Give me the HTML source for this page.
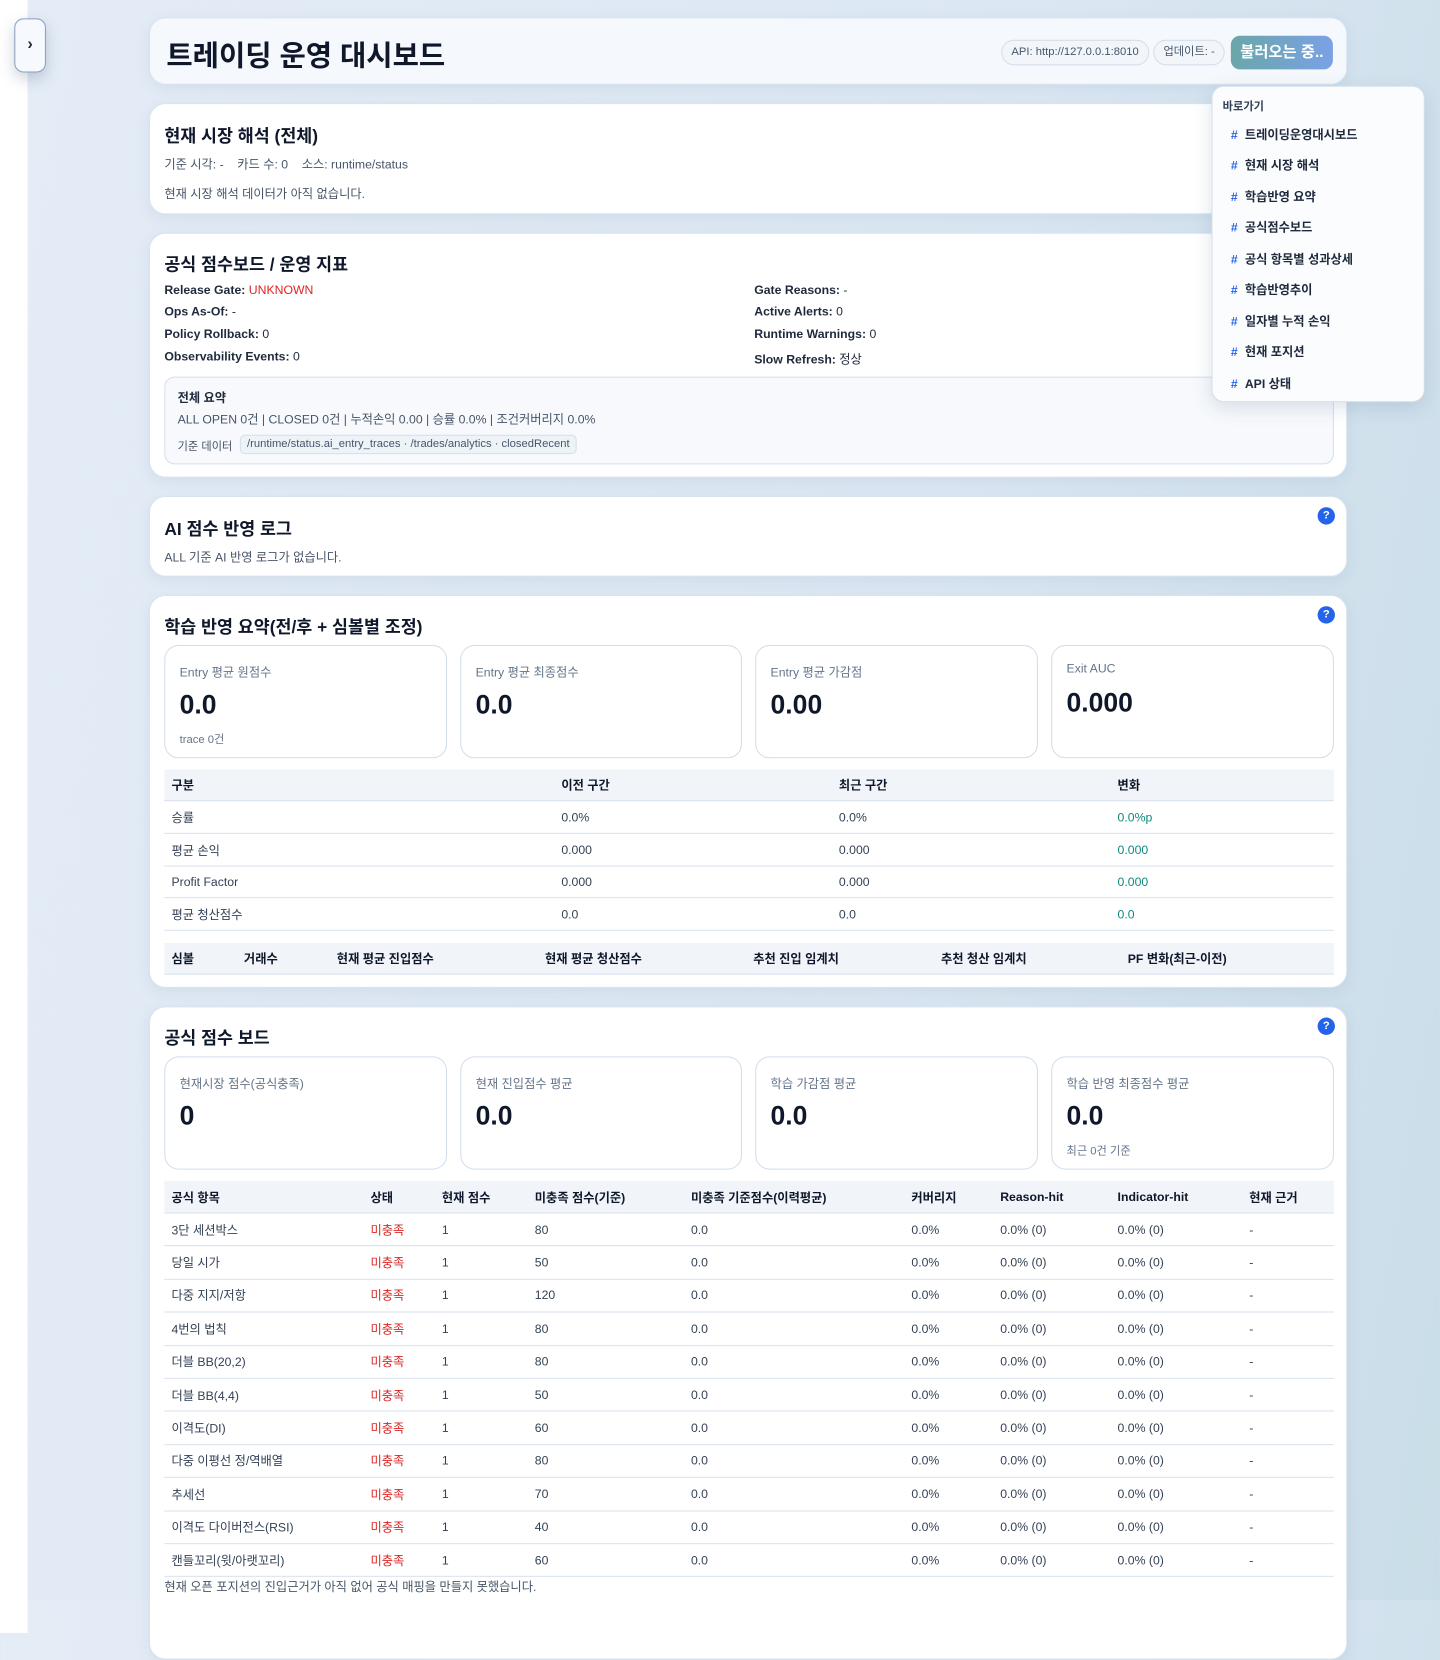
<!DOCTYPE html>
<html><head><meta charset="utf-8"><style>
*{box-sizing:border-box;margin:0;padding:0}
body{width:1440px;height:1600px;overflow:hidden;font-family:"Liberation Sans","Noto Sans CJK KR",sans-serif;color:#1e293b;background:linear-gradient(100deg,#e4ecf6 0%,#dce7f3 60%,#c9dde8 100%);position:relative}
#w{position:absolute;left:0;top:0;width:1411px;height:1568px;transform:scale(1.0206);transform-origin:0 0}
.strip{position:absolute;left:0;top:0;width:27px;height:1600px;background:#fff}
.tog{position:absolute;left:14px;top:18px;width:31px;height:53px;border:1px solid #8aa0bd;border-radius:9px;background:#f6f9fd;box-shadow:0 6px 14px rgba(60,80,120,.25);text-align:center;line-height:50px;font-size:16px;font-weight:bold;color:#1e293b}
.card{position:absolute;left:146px;width:1174px;background:#fff;border-radius:16px;border:1px solid #d9e3ef;box-shadow:0 4px 14px rgba(100,130,170,.12)}
.hdr{top:17px;height:66px;background:#f5f8fc}
.hdr h1{position:absolute;left:16px;top:15px;font-size:28px;font-weight:bold;color:#0f172a}
.pill{position:absolute;top:21px;height:25px;border:1px solid #d5dfeb;border-radius:13px;font-size:11px;color:#475569;line-height:23px;padding:0 9px;background:#f2f6fb}
.btn{position:absolute;left:1059px;top:17px;width:100px;height:33px;border-radius:9px;background:linear-gradient(90deg,#6aa7a8,#7aa1e6);color:#fff;font-size:15px;font-weight:bold;line-height:33px;text-align:center}
h2{position:absolute;left:14px;font-size:17px;font-weight:bold;color:#0f172a}
.t{position:absolute;font-size:12px;color:#475569;white-space:nowrap}
.k{position:absolute;font-size:12px;color:#1e293b;white-space:nowrap}
.k b{font-weight:bold}
.red{color:#dc2626}
.sum{position:absolute;left:14px;top:140px;width:1146px;height:86px;border:1px solid #d5dfeb;border-radius:10px;background:#f7f9fc}
.code{position:absolute;left:73px;top:56px;height:19px;border:1px solid #d5dfeb;border-radius:5px;background:#eef3f8;font-size:11px;color:#475569;line-height:17px;padding:0 6px}
.q{position:absolute;right:11px;width:17px;height:17px;border-radius:50%;background:#2563eb;color:#fff;font-size:11px;font-weight:bold;text-align:center;line-height:17px}
.m{position:absolute;width:277px;height:111px;border:1px solid #d2ddeb;border-radius:14px;background:#fff}
.m .l{position:absolute;left:14px;top:17px;font-size:12px;color:#64748b}
.m .v{position:absolute;left:14px;top:42px;font-size:26px;font-weight:bold;color:#0f172a}
.m .s{position:absolute;left:14px;top:83px;font-size:11px;color:#64748b}
.tbl{position:absolute;left:14px;width:1146px}
.row{position:relative;border-bottom:1px solid #d8e2ee;font-size:12px;color:#334155}
.row span{position:absolute;top:50%;transform:translateY(-50%);white-space:nowrap}
.th{background:#f1f5fa;font-weight:bold;color:#0f172a}
.g{color:#0f8a7a}
.nav{position:absolute;left:1187px;top:84px;width:209px;height:310px;background:#fbfcfe;border:1px solid #d5dfeb;border-radius:12px;box-shadow:0 6px 18px rgba(80,110,150,.18)}
.nav .h{position:absolute;left:10px;top:11px;font-size:11px;color:#334155;font-weight:bold}
.nav .i{position:absolute;left:18px;font-size:12px;font-weight:bold;color:#1e293b;white-space:nowrap}
.nav .i i{font-style:normal;color:#2563eb;margin-right:7px}
</style></head><body>
<div id="w">
<div class="strip"></div>
<div class="tog">›</div>

<div class="card hdr"><h1>트레이딩 운영 대시보드</h1>
<div class="pill" style="left:834px">API: http://127.0.0.1:8010</div>
<div class="pill" style="left:983px">업데이트: -</div>
<div class="btn">불러오는 중..</div></div>

<div class="card" style="top:101px;height:109px">
<h2 style="top:17px">현재 시장 해석 (전체)</h2>
<div class="t" style="left:14px;top:50px">기준 시각: - &nbsp;&nbsp; 카드 수: 0 &nbsp;&nbsp; 소스: runtime/status</div>
<div class="t" style="left:14px;top:79px">현재 시장 해석 데이터가 아직 없습니다.</div></div>

<div class="card" style="top:228px;height:240px">
<h2 style="top:16px">공식 점수보드 / 운영 지표</h2>
<div class="k" style="left:14px;top:48px"><b>Release Gate:</b> <span class="red">UNKNOWN</span></div>
<div class="k" style="left:14px;top:69px"><b>Ops As-Of:</b> -</div>
<div class="k" style="left:14px;top:91px"><b>Policy Rollback:</b> 0</div>
<div class="k" style="left:14px;top:113px"><b>Observability Events:</b> 0</div>
<div class="k" style="left:592px;top:48px"><b>Gate Reasons:</b> -</div>
<div class="k" style="left:592px;top:69px"><b>Active Alerts:</b> 0</div>
<div class="k" style="left:592px;top:91px"><b>Runtime Warnings:</b> 0</div>
<div class="k" style="left:592px;top:114px"><b>Slow Refresh:</b> 정상</div>
<div class="sum"><div class="k" style="left:12px;top:11px"><b>전체 요약</b></div>
<div class="t" style="left:12px;top:32px">ALL OPEN 0건 | CLOSED 0건 | 누적손익 0.00 | 승률 0.0% | 조건커버리지 0.0%</div>
<div class="t" style="left:12px;top:59px;font-size:11px">기준 데이터</div>
<div class="code">/runtime/status.ai_entry_traces · /trades/analytics · closedRecent</div></div></div>

<div class="card" style="top:486px;height:79px">
<h2 style="top:17px">AI 점수 반영 로그</h2><div class="q" style="top:10px">?</div>
<div class="t" style="left:14px;top:50px">ALL 기준 AI 반영 로그가 없습니다.</div></div>

<div class="card" style="top:583px;height:385px">
<h2 style="top:16px">학습 반영 요약(전/후 + 심볼별 조정)</h2><div class="q" style="top:10px">?</div>
<div class="m" style="left:14px;top:48px"><div class="l">Entry 평균 원점수</div><div class="v">0.0</div><div class="s">trace 0건</div></div>
<div class="m" style="left:304px;top:48px;width:276px"><div class="l">Entry 평균 최종점수</div><div class="v">0.0</div></div>
<div class="m" style="left:593px;top:48px"><div class="l">Entry 평균 가감점</div><div class="v">0.00</div></div>
<div class="m" style="left:883px;top:48px"><div class="l" style="top:15px">Exit AUC</div><div class="v" style="top:40px">0.000</div></div>
<div class="tbl" style="top:170px">
<div class="row th" style="height:31px"><span style="left:7px">구분</span><span style="left:389px">이전 구간</span><span style="left:661px">최근 구간</span><span style="left:934px">변화</span></div>
<div class="row" style="height:32px"><span style="left:7px">승률</span><span style="left:389px">0.0%</span><span style="left:661px">0.0%</span><span style="left:934px" class="g">0.0%p</span></div>
<div class="row" style="height:32px"><span style="left:7px">평균 손익</span><span style="left:389px">0.000</span><span style="left:661px">0.000</span><span style="left:934px" class="g">0.000</span></div>
<div class="row" style="height:31px"><span style="left:7px">Profit Factor</span><span style="left:389px">0.000</span><span style="left:661px">0.000</span><span style="left:934px" class="g">0.000</span></div>
<div class="row" style="height:32px"><span style="left:7px">평균 청산점수</span><span style="left:389px">0.0</span><span style="left:661px">0.0</span><span style="left:934px" class="g">0.0</span></div>
</div>
<div class="tbl" style="top:340px"><div class="row th" style="height:31px"><span style="left:7px">심볼</span><span style="left:78px">거래수</span><span style="left:169px">현재 평균 진입점수</span><span style="left:373px">현재 평균 청산점수</span><span style="left:577px">추천 진입 임계치</span><span style="left:761px">추천 청산 임계치</span><span style="left:944px">PF 변화(최근-이전)</span></div></div>
</div>

<div class="card" style="top:986px;height:640px">
<h2 style="top:16px">공식 점수 보드</h2><div class="q" style="top:10px">?</div>
<div class="m" style="left:14px;top:48px"><div class="l">현재시장 점수(공식충족)</div><div class="v">0</div></div>
<div class="m" style="left:304px;top:48px;width:276px"><div class="l">현재 진입점수 평균</div><div class="v">0.0</div></div>
<div class="m" style="left:593px;top:48px"><div class="l">학습 가감점 평균</div><div class="v">0.0</div></div>
<div class="m" style="left:883px;top:48px"><div class="l">학습 반영 최종점수 평균</div><div class="v">0.0</div><div class="s">최근 0건 기준</div></div>
<div class="tbl" style="top:170px">
<div class="row th" style="height:32px"><span style="left:7px">공식 항목</span><span style="left:202px">상태</span><span style="left:272px">현재 점수</span><span style="left:363px">미충족 점수(기준)</span><span style="left:516px">미충족 기준점수(이력평균)</span><span style="left:732px">커버리지</span><span style="left:819px">Reason-hit</span><span style="left:934px">Indicator-hit</span><span style="left:1063px">현재 근거</span></div>
<div class="row" style="height:32.4px"><span style="left:7px">3단 세션박스</span><span style="left:202px" class="red">미충족</span><span style="left:272px">1</span><span style="left:363px">80</span><span style="left:516px">0.0</span><span style="left:732px">0.0%</span><span style="left:819px">0.0% (0)</span><span style="left:934px">0.0% (0)</span><span style="left:1063px">-</span></div>
<div class="row" style="height:32.4px"><span style="left:7px">당일 시가</span><span style="left:202px" class="red">미충족</span><span style="left:272px">1</span><span style="left:363px">50</span><span style="left:516px">0.0</span><span style="left:732px">0.0%</span><span style="left:819px">0.0% (0)</span><span style="left:934px">0.0% (0)</span><span style="left:1063px">-</span></div>
<div class="row" style="height:32.4px"><span style="left:7px">다중 지지/저항</span><span style="left:202px" class="red">미충족</span><span style="left:272px">1</span><span style="left:363px">120</span><span style="left:516px">0.0</span><span style="left:732px">0.0%</span><span style="left:819px">0.0% (0)</span><span style="left:934px">0.0% (0)</span><span style="left:1063px">-</span></div>
<div class="row" style="height:32.4px"><span style="left:7px">4번의 법칙</span><span style="left:202px" class="red">미충족</span><span style="left:272px">1</span><span style="left:363px">80</span><span style="left:516px">0.0</span><span style="left:732px">0.0%</span><span style="left:819px">0.0% (0)</span><span style="left:934px">0.0% (0)</span><span style="left:1063px">-</span></div>
<div class="row" style="height:32.4px"><span style="left:7px">더블 BB(20,2)</span><span style="left:202px" class="red">미충족</span><span style="left:272px">1</span><span style="left:363px">80</span><span style="left:516px">0.0</span><span style="left:732px">0.0%</span><span style="left:819px">0.0% (0)</span><span style="left:934px">0.0% (0)</span><span style="left:1063px">-</span></div>
<div class="row" style="height:32.4px"><span style="left:7px">더블 BB(4,4)</span><span style="left:202px" class="red">미충족</span><span style="left:272px">1</span><span style="left:363px">50</span><span style="left:516px">0.0</span><span style="left:732px">0.0%</span><span style="left:819px">0.0% (0)</span><span style="left:934px">0.0% (0)</span><span style="left:1063px">-</span></div>
<div class="row" style="height:32.4px"><span style="left:7px">이격도(DI)</span><span style="left:202px" class="red">미충족</span><span style="left:272px">1</span><span style="left:363px">60</span><span style="left:516px">0.0</span><span style="left:732px">0.0%</span><span style="left:819px">0.0% (0)</span><span style="left:934px">0.0% (0)</span><span style="left:1063px">-</span></div>
<div class="row" style="height:32.4px"><span style="left:7px">다중 이평선 정/역배열</span><span style="left:202px" class="red">미충족</span><span style="left:272px">1</span><span style="left:363px">80</span><span style="left:516px">0.0</span><span style="left:732px">0.0%</span><span style="left:819px">0.0% (0)</span><span style="left:934px">0.0% (0)</span><span style="left:1063px">-</span></div>
<div class="row" style="height:32.4px"><span style="left:7px">추세선</span><span style="left:202px" class="red">미충족</span><span style="left:272px">1</span><span style="left:363px">70</span><span style="left:516px">0.0</span><span style="left:732px">0.0%</span><span style="left:819px">0.0% (0)</span><span style="left:934px">0.0% (0)</span><span style="left:1063px">-</span></div>
<div class="row" style="height:32.4px"><span style="left:7px">이격도 다이버전스(RSI)</span><span style="left:202px" class="red">미충족</span><span style="left:272px">1</span><span style="left:363px">40</span><span style="left:516px">0.0</span><span style="left:732px">0.0%</span><span style="left:819px">0.0% (0)</span><span style="left:934px">0.0% (0)</span><span style="left:1063px">-</span></div>
<div class="row" style="height:32.4px"><span style="left:7px">캔들꼬리(윗/아랫꼬리)</span><span style="left:202px" class="red">미충족</span><span style="left:272px">1</span><span style="left:363px">60</span><span style="left:516px">0.0</span><span style="left:732px">0.0%</span><span style="left:819px">0.0% (0)</span><span style="left:934px">0.0% (0)</span><span style="left:1063px">-</span></div>
</div>
<div class="t" style="left:14px;top:559px">현재 오픈 포지션의 진입근거가 아직 없어 공식 매핑을 만들지 못했습니다.</div>
</div>

<div class="nav"><div class="h">바로가기</div>
<div class="i" style="top:38px"><i>#</i>트레이딩운영대시보드</div>
<div class="i" style="top:68px"><i>#</i>현재 시장 해석</div>
<div class="i" style="top:99px"><i>#</i>학습반영 요약</div>
<div class="i" style="top:129px"><i>#</i>공식점수보드</div>
<div class="i" style="top:160px"><i>#</i>공식 항목별 성과상세</div>
<div class="i" style="top:190px"><i>#</i>학습반영추이</div>
<div class="i" style="top:221px"><i>#</i>일자별 누적 손익</div>
<div class="i" style="top:251px"><i>#</i>현재 포지션</div>
<div class="i" style="top:282px"><i>#</i>API 상태</div>
</div>
</div>
</body></html>
